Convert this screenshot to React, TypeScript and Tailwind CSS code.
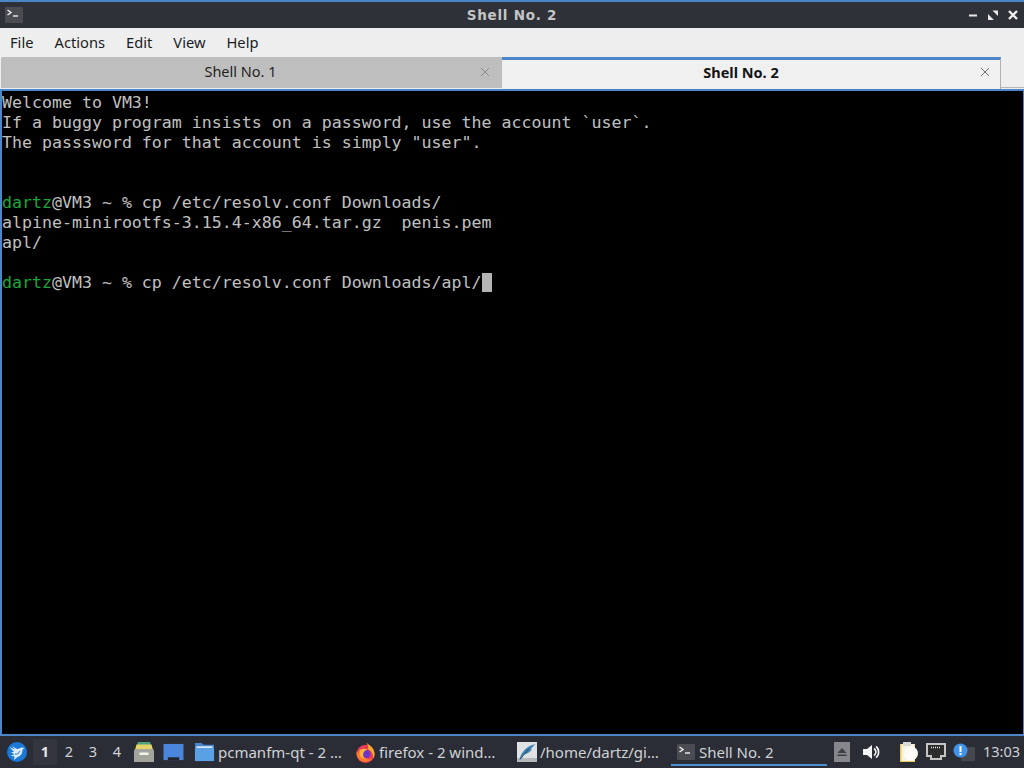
import React from "react";

const ui = "font-['Noto_Sans','Open_Sans',sans-serif]";

function TermGlyph({ className = "" }: { className?: string }) {
  return (
    <svg viewBox="0 0 18 16" className={className}>
      <rect width="18" height="16" rx="1" fill="#4a4c52" />
      <path d="M2.5 3 L6 5.5 L2.5 8" stroke="#f0f0f0" strokeWidth="1.4" fill="none" />
      <path d="M8 9 H13" stroke="#f0f0f0" strokeWidth="1.4" />
    </svg>
  );
}

function TabClose({ color }: { color: string }) {
  return (
    <svg viewBox="0 0 10 10" className="w-[10px] h-[10px]">
      <path d="M1 1 L9 9 M9 1 L1 9" stroke={color} strokeWidth="1" />
    </svg>
  );
}

function Bird() {
  return (
    <svg viewBox="0 0 22 22" className="w-[22px] h-[22px]">
      <circle cx="11" cy="11" r="10" fill="#1a78d6" />
      <path d="M3.5 6 L9 8.5 L6 5 L11 8 C13 8 14 7 15.5 6.5 L18.5 7 L16.5 8.5 C16.5 12 15 15 11.5 16 L8 19 L8.5 15.5 L4.5 14.5 L8.5 13.5 L5 11 L8 11 Z" fill="#dcecfa" />
      <path d="M9 13 C11 13.5 13 12.5 14 10" stroke="#1a78d6" strokeWidth="1" fill="none" />
    </svg>
  );
}

function Drawer() {
  return (
    <svg viewBox="0 0 22 22" className="w-[22px] h-[22px]">
      <path d="M5 1 H17 L18 4 H4 Z" fill="#4fa27a" />
      <path d="M3.5 3.5 H18.5 L20 9 H2 Z" fill="#e6d566" />
      <path d="M1 10 Q1 8 3 8 H19 Q21 8 21 10 V21 H1 Z" fill="#a4a49e" />
      <rect x="6.5" y="11.5" width="9" height="2.5" rx="0.5" fill="#f3f3ea" />
    </svg>
  );
}

function Desktop() {
  return (
    <svg viewBox="0 0 22 20" className="w-[21px] h-[19px]">
      <rect x="0.5" y="1" width="21" height="17" fill="#4a86dc" />
      <path d="M5 18 V15 H17 V18 Z" fill="#23262e" />
    </svg>
  );
}

function Folder() {
  return (
    <svg viewBox="0 0 22 20" className="w-[21px] h-[20px]">
      <path d="M1 0.5 H8 L10 2.5 H21 V19.5 H1 Z" fill="#4786cc" />
      <rect x="2.5" y="4" width="17" height="2" fill="#dbe9f7" />
      <rect x="1" y="6" width="20" height="13.5" fill="#5aa0e4" />
    </svg>
  );
}

function Firefox() {
  return (
    <svg viewBox="0 0 22 22" className="w-[21px] h-[21px]">
      <circle cx="11" cy="12.5" r="9.5" fill="#ee3a56" />
      <path d="M11.5 0.5 C14 2.5 20.5 6 20.5 12.5 C20.5 14.5 20 16 19 17.5 C19.5 12 16.5 8.5 13.5 7.5 C14.5 5.5 13.5 3 11.5 0.5 Z" fill="#ffa92e" />
      <path d="M1.8 9.5 C1 14 3 18.5 7.5 20.5 C12 22 16.5 20 18.5 17 C14.5 19 9.5 18 7 15 C5 13 3.5 11.5 1.8 9.5 Z" fill="#ff7b2e" />
      <circle cx="12" cy="12.5" r="4.2" fill="#6f35c9" />
      <path d="M4.5 9 C7 6.5 10.5 6.5 13.5 8 C10 8.5 8.5 10.5 8.5 13.5 C8.5 16 10.5 17.5 13 17.5 C8.5 18.5 5 15.5 4.5 12 Z" fill="#ffb43a" />
    </svg>
  );
}

function Quill() {
  return (
    <svg viewBox="0 0 20 20" className="w-[20px] h-[20px]">
      <rect width="20" height="20" fill="#dfe1e2" />
      <rect y="16" width="20" height="4" fill="#b4b8b8" />
      <path d="M2.5 17.5 C4 11 9 4 18.5 2 C16 4 15 6 13.5 7.5 L15 7.5 C12.5 10.5 9.5 12 7 12.5 L4 17 Z" fill="#3f82b0" />
      <path d="M3 17.5 L12 6.5" stroke="#1d3d55" strokeWidth="0.8" />
    </svg>
  );
}

function Eject() {
  return (
    <div className="w-[16px] h-[20px] bg-[#85878a] flex items-center justify-center">
      <svg viewBox="0 0 10 10" className="w-[10px] h-[10px]">
        <path d="M5 1 L9.5 6 H0.5 Z M0.5 7.5 H9.5 V9 H0.5 Z" fill="#3c3e44" />
      </svg>
    </div>
  );
}

function Speaker() {
  return (
    <svg viewBox="0 0 18 16" className="w-[18px] h-[16px]">
      <path d="M1 5 H5 L10 1 V15 L5 11 H1 Z" fill="#f5f5f5" />
      <path d="M12 4.5 C14.5 6 14.5 10 12 11.5 M14 2.5 C17.5 5 17.5 11 14 13.5" stroke="#f5f5f5" strokeWidth="1.6" fill="none" />
    </svg>
  );
}

function Clipboard() {
  return (
    <svg viewBox="0 0 20 22" className="w-[20px] h-[22px]">
      <rect x="1" y="3" width="15" height="18" fill="#e8c95a" />
      <rect x="2.5" y="3" width="13" height="17" fill="#f6f3e6" />
      <rect x="4" y="1" width="8" height="4" fill="#d8d8d4" />
      <circle cx="12" cy="12.5" r="7" fill="#fbfbf8" />
    </svg>
  );
}

function Network() {
  return (
    <svg viewBox="0 0 20 18" className="w-[20px] h-[18px]">
      <path d="M1 1 H19 V13 H15 V16 H5 V13 H1 Z" fill="#2c2c2c" stroke="#c4c4c4" strokeWidth="2" />
      <path d="M5 4.5 H15" stroke="#e4e4e4" strokeWidth="1.4" strokeDasharray="1 1" />
    </svg>
  );
}

function Notice() {
  return (
    <svg viewBox="0 0 22 18" className="w-[22px] h-[18px]">
      <rect x="8" y="4" width="14" height="14" fill="#45474c" />
      <circle cx="7.5" cy="7.5" r="7" fill="#3f93e8" />
      <rect x="6.5" y="3" width="2" height="6" fill="#ffffff" />
      <rect x="6.5" y="10" width="2" height="2" fill="#ffffff" />
    </svg>
  );
}

function TaskItem({ icon, label, w, pad, active }: { icon: React.ReactNode; label: string; w: string; pad: string; active?: boolean }) {
  return (
    <div className={`${w} ${pad} h-full relative flex items-center gap-[3px] shrink-0`}>
      <div className="shrink-0 flex items-center">{icon}</div>
      <span className="text-[15px] text-[#d0d2d4] whitespace-pre">{label}</span>
      {active && <div className="absolute left-0 right-0 bottom-[2px] h-[2px] bg-[#4f8fd0]" />}
    </div>
  );
}

export default function App() {
  return (
    <div className={`w-[1024px] h-[768px] flex flex-col overflow-hidden bg-black ${ui}`}>
      {/* title bar */}
      <div className="h-[28px] shrink-0 bg-[#2f3138] border-t-[2px] border-[#4a86c8] flex items-center justify-between pl-[5px] pr-[5px] relative">
        <TermGlyph className="w-[18px] h-[16px]" />
        <span className="absolute left-0 right-0 text-center font-['DejaVu_Sans',sans-serif] font-bold text-[13.5px] text-[#c4c5c7] tracking-[0.75px]">Shell No. 2</span>
        <div className="flex items-center gap-[8px]">
          <svg viewBox="0 0 12 12" className="w-[12px] h-[12px]"><path d="M2 6.5 H10" stroke="#e8e8e8" strokeWidth="2" /></svg>
          <svg viewBox="0 0 12 12" className="w-[12px] h-[12px]"><path d="M5.5 1.5 H11 V7 Z M1 5 L7 11 H1 Z" fill="#e8e8e8" /></svg>
          <svg viewBox="0 0 12 12" className="w-[12px] h-[12px]"><path d="M2 2 L10 10 M10 2 L2 10" stroke="#f0f0f0" strokeWidth="2.4" /></svg>
        </div>
      </div>
      {/* menu bar */}
      <div className="h-[29px] shrink-0 bg-[#eeeeee] flex items-center pl-[10px] gap-[21px] text-[14.7px] text-[#1c1c1c]">
        <span>File</span>
        <span>Actions</span>
        <span>Edit</span>
        <span>View</span>
        <span>Help</span>
      </div>
      {/* tab bar */}
      <div className="h-[34px] shrink-0 bg-[#eeeeee] flex items-start border-b-[2px] border-[#4a86c8] relative pl-[1px] text-[14.5px]">
        <div className="w-[501px] h-[31px] bg-[#bebebe] relative flex items-center justify-center text-[#1f1f1f] pr-[22px] pb-[2px] rounded-tl-[2px]">
          <span>Shell No. 1</span>
          <div className="absolute right-[12px] top-[10px] flex"><TabClose color="#8c8c8c" /></div>
        </div>
        <div className="w-[499px] h-[32px] bg-[#f0f0f0] border-t-[3px] border-r border-[#4a86c8] border-r-[#b0b0b0] relative flex items-center justify-center pr-[20px] pb-[3px] font-bold text-[#141414]">
          <span>Shell No. 2</span>
          <div className="absolute right-[10px] top-[7px] flex"><TabClose color="#6e6e6e" /></div>
        </div>
        <div className="flex-1 h-[31px] border-b border-[#b8b8b8]" />
      </div>
      {/* terminal */}
      <div className="flex-1 min-h-0 bg-black border-l-[2px] border-r-[1px] border-l-[#4a86c8] border-r-[#4a86c8] border-b-[2px] border-b-[#4a86c8] font-['DejaVu_Sans_Mono',monospace] text-[16.6px] leading-[20px] text-[#c0c0c0] whitespace-pre pt-[2px]">
        <div>Welcome to VM3!</div>
        <div>If a buggy program insists on a password, use the account `user`.</div>
        <div>The passsword for that account is simply "user".</div>
        <div>&nbsp;</div>
        <div>&nbsp;</div>
        <div><span className="text-[#18a838]">dartz</span>@VM3 ~ % cp /etc/resolv.conf Downloads/</div>
        <div>alpine-minirootfs-3.15.4-x86_64.tar.gz  penis.pem</div>
        <div>apl/</div>
        <div>&nbsp;</div>
        <div className="flex">
          <span><span className="text-[#18a838]">dartz</span>@VM3 ~ % cp /etc/resolv.conf Downloads/apl/</span>
          <span className="w-[10px] h-[19px] bg-[#b4b4b4]" />
        </div>
      </div>
      {/* taskbar */}
      <div className="h-[32px] shrink-0 bg-[#2b2d36] flex items-center text-[#d0d2d4] text-[15px]">
        <div className="w-[33px] flex justify-center pl-[0px] shrink-0"><Bird /></div>
        <div className="flex h-full items-center text-[14.5px] shrink-0">
          <div className="w-[24px] h-[26px] flex items-center justify-center bg-[#34363f] font-bold text-[#e4e4e4] rounded-[2px]">1</div>
          <div className="w-[24px] text-center">2</div>
          <div className="w-[24px] text-center">3</div>
          <div className="w-[24px] text-center">4</div>
        </div>
        <div className="w-[29px] flex justify-center shrink-0"><Drawer /></div>
        <div className="w-[31px] flex justify-center shrink-0"><Desktop /></div>
        <TaskItem w="w-[164px]" pad="pl-[5px]" icon={<Folder />} label="pcmanfm-qt - 2 …" />
        <TaskItem w="w-[163px]" pad="pl-[2px]" icon={<Firefox />} label="firefox - 2 wind…" />
        <TaskItem w="w-[155px]" pad="pl-[1px]" icon={<Quill />} label="/home/dartz/gi…" />
        <TaskItem w="w-[156px]" pad="pl-[6px]" active icon={<TermGlyph className="w-[18px] h-[16px] mr-[1px]" />} label="Shell No. 2" />
        <div className="flex-1" />
        <div className="flex items-center shrink-0 pr-[4px]">
          <div className="w-[16px] flex justify-center mr-[12px]"><Eject /></div>
          <div className="mr-[19px] flex"><Speaker /></div>
          <div className="mr-[7px] flex"><Clipboard /></div>
          <div className="mr-[7px] flex"><Network /></div>
          <div className="mr-[8px] flex"><Notice /></div>
          <span className="text-[14.5px]">13:03</span>
        </div>
      </div>
    </div>
  );
}
